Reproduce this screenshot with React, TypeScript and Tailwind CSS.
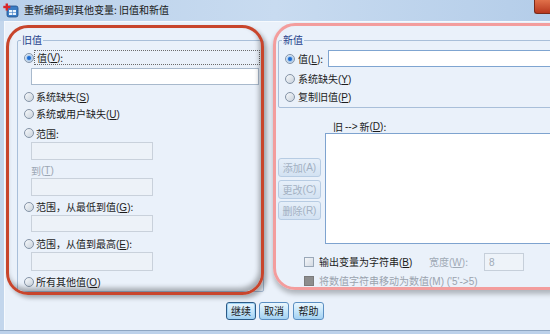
import React from "react";

const FONT = { fontFamily: '"Noto Sans CJK SC", "Liberation Sans", sans-serif' };

function Radio({ checked }: { checked?: boolean }) {
  return (
    <span className="w-[10px] h-[10px] rounded-full border border-[#8493a6] bg-gradient-to-br from-[#f7f9fb] to-[#c9d2dc] flex items-center justify-center shrink-0">
      {checked && <span className="w-[4px] h-[4px] rounded-full bg-[#1d6bd0] shadow-[0_0_2px_1px_#8cbcf0]" />}
    </span>
  );
}

function Mn({ c }: { c: string }) {
  return (
    <span className="font-['Liberation_Sans']">
      (<u>{c}</u>)
    </span>
  );
}

function DisabledInput({ h, mt }: { h: string; mt: string }) {
  return <div className={`ml-[7px] w-[122px] ${h} ${mt} border border-[#c9d1db] bg-[#edf2f8]`} />;
}

function SideBtn({ label, k, mt }: { label: string; k: string; mt: string }) {
  return (
    <div className={`${mt} w-[43px] h-[19px] rounded-[3px] border border-[#b7cce3] bg-gradient-to-b from-[#e6eff9] to-[#d3e2f2] flex items-center justify-center text-[#a3b1c2] text-[10px] leading-none`}>
      {label}
      <span className="font-['Liberation_Sans']">({k})</span>
    </div>
  );
}

function BottomBtn({ label, def, w }: { label: string; def?: boolean; w: string }) {
  return (
    <div
      className={`${w} h-[18px] rounded-[3px] border ${
        def ? "border-[#2c5a86] shadow-[inset_0_0_0_1px_#9fd3f5]" : "border-[#5b8fc2]"
      } bg-gradient-to-b from-[#eaf6fd] via-[#c6e6fa] to-[#a3d1f2] flex items-center justify-center text-[10px] leading-none text-[#1b1b1b]`}
    >
      {label}
    </div>
  );
}

export default function App() {
  return (
    <div className="w-[550px] h-[334px] overflow-hidden bg-[#c3d6ec] flex flex-col text-[10px] text-[#1c1c1c]" style={FONT}>
      {/* Title bar */}
      <div className="h-[21px] shrink-0 flex items-start bg-gradient-to-r from-[#b9d0ea] via-[#c8dbf0] to-[#b4cde9]">
        <div className="ml-[3px] mt-[3px] w-[16px] h-[15px]">
          <svg width="16" height="15" viewBox="0 0 16 15">
            <rect x="4" y="3" width="11" height="11" rx="2" fill="#3a7cc4" stroke="#1f4f8a" strokeWidth="0.8" />
            <rect x="6" y="7" width="7" height="5" fill="#eaf3fc" />
            <line x1="6" y1="9.5" x2="13" y2="9.5" stroke="#3a7cc4" strokeWidth="0.6" />
            <line x1="9.5" y1="7" x2="9.5" y2="12" stroke="#3a7cc4" strokeWidth="0.6" />
            <rect x="2.6" y="0.5" width="2.4" height="7" fill="#d8262a" />
            <rect x="0.3" y="2.8" width="7" height="2.4" fill="#d8262a" />
          </svg>
        </div>
        <div className="ml-[5px] mt-[4px] leading-[12px] text-[10px] text-[#1a1a1a]">重新编码到其他变量: 旧值和新值</div>
        <div className="ml-auto w-[16px] h-[14px] rounded-bl-[3px] bg-gradient-to-b from-[#e0704a] to-[#b7361d] border-l border-b border-[#7a2a1a]" />
      </div>

      {/* Body */}
      <div className="flex-1 ml-[4px] bg-[#eaf1fa] border-t border-l border-[#f6f9fd] flex flex-col relative">
        <div className="flex items-start pt-[1px]">
          {/* Left column */}
          <div className="relative ml-[1px] mt-[2px] w-[258px] h-[270px] shrink-0">
            <div className="relative mt-[15px] ml-[11px] w-[247px] h-[252px] border border-[#a9bfd9] rounded-[2px] flex flex-col pl-[6px] pt-[9px]">
              <span className="absolute -top-[7px] left-[3px] px-[1px] bg-[#eaf1fa] text-[#1f3f8c] leading-[12px]">旧值</span>
              <div className="h-[15px] flex items-center">
                <Radio checked />
                <div className="flex-1 mr-[3px] h-[15px] border border-dotted border-[#6b6b6b] flex items-center pl-[2px]">
                  值<Mn c="V" />:
                </div>
              </div>
              <div className="ml-[7px] mt-[3px] w-[228px] h-[17px] border border-[#a8b9cc] bg-white" />
              <div className="mt-[5px] h-[14px] flex items-center gap-[2px]">
                <Radio />
                <span>系统缺失<Mn c="S" /></span>
              </div>
              <div className="mt-[3px] h-[14px] flex items-center gap-[2px]">
                <Radio />
                <span>系统或用户缺失<Mn c="U" /></span>
              </div>
              <div className="mt-[5px] h-[14px] flex items-center gap-[2px]">
                <Radio />
                <span>范围:</span>
              </div>
              <DisabledInput h="h-[18px]" mt="mt-[2px]" />
              <div className="ml-[7px] mt-[3px] h-[14px] flex items-center text-[#9ba6b3]">
                到<Mn c="T" />
              </div>
              <DisabledInput h="h-[18px]" mt="mt-[1px]" />
              <div className="mt-[4px] h-[14px] flex items-center gap-[2px]">
                <Radio />
                <span>范围，从最低到值<Mn c="G" />:</span>
              </div>
              <DisabledInput h="h-[17px]" mt="mt-[1px]" />
              <div className="mt-[5px] h-[14px] flex items-center gap-[2px]">
                <Radio />
                <span>范围，从值到最高<Mn c="E" />:</span>
              </div>
              <DisabledInput h="h-[19px]" mt="mt-[1px]" />
              <div className="mt-[4px] h-[14px] flex items-center gap-[2px]">
                <Radio />
                <span>所有其他值<Mn c="O" /></span>
              </div>
            </div>
            {/* red annotation */}
            <div className="absolute inset-0 rounded-[22px] border-[3px] border-[#c8452c] shadow-[3px_3px_4px_rgba(0,0,0,0.3),inset_-2px_-4px_5px_rgba(0,0,0,0.3)] pointer-events-none" />
          </div>

          {/* Right column */}
          <div className="relative ml-[9px] w-[300px] h-[267px] shrink-0">
            <div className="relative mt-[17px] ml-[5px] w-[290px] h-[68px] border border-[#a9bfd9] rounded-[2px] flex flex-col pl-[6px] pt-[9px]">
              <span className="absolute -top-[7px] left-[3px] px-[1px] bg-[#eaf1fa] text-[#1f3f8c] leading-[12px]">新值</span>
              <div className="h-[17px] flex items-center">
                <Radio checked />
                <span className="ml-[3px] w-[30px]">值<Mn c="L" />:</span>
                <div className="w-[240px] h-[17px] border border-[#7fa5d1] bg-white" />
              </div>
              <div className="mt-[5px] h-[14px] flex items-center gap-[3px]">
                <Radio />
                <span>系统缺失<Mn c="Y" /></span>
              </div>
              <div className="mt-[4px] h-[14px] flex items-center gap-[3px]">
                <Radio />
                <span>复制旧值<Mn c="P" /></span>
              </div>
            </div>

            <div className="mt-[11px] flex items-start">
              <div className="ml-[5px] w-[43px] pt-[39px] flex flex-col">
                <SideBtn label="添加" k="A" mt="mt-0" />
                <SideBtn label="更改" k="C" mt="mt-[3px]" />
                <SideBtn label="删除" k="R" mt="mt-[2px]" />
              </div>
              <div className="ml-[4px] flex flex-col">
                <div className="h-[14px] pl-[8px] flex items-center">
                  旧 <span className="font-['Liberation_Sans'] mx-[2px]">--&gt;</span> 新<Mn c="D" />:
                </div>
                <div className="w-[240px] h-[111px] border border-[#7ea3cf] bg-white" />
              </div>
            </div>

            <div className="mt-[9px] ml-[31px] h-[18px] flex items-center">
              <span className="w-[10px] h-[10px] border border-[#9aa8b8] bg-gradient-to-br from-[#f4f6f9] to-[#d4dbe3] shrink-0" />
              <span className="ml-[5px] w-[110px]">输出变量为字符串<Mn c="B" /></span>
              <span className="w-[55px] text-[#a0aab6]">宽度<Mn c="W" />:</span>
              <div className="w-[40px] h-[18px] border border-[#c6cfda] bg-[#eef3f9] flex items-center pl-[4px] text-[#a0aab6] font-['Liberation_Sans']">
                8
              </div>
            </div>
            <div className="mt-[3px] ml-[31px] h-[14px] flex items-center">
              <span className="w-[10px] h-[10px] border border-[#7a7a7a] bg-[#8d8d8d] shrink-0" />
              <span className="ml-[5px] text-[#9aa3ae]">
                将数值字符串移动为数值<span className="font-['Liberation_Sans']">(M) ('5'-&gt;5)</span>
              </span>
            </div>

            {/* pink annotation */}
            <div className="absolute inset-0 rounded-[22px] border-[3px] border-[#f39d9d] shadow-[0_4px_5px_rgba(0,0,0,0.25)] pointer-events-none" />
          </div>
        </div>

        {/* bottom buttons */}
        <div className="mt-[7px] pl-[221px] flex items-center gap-[3px]">
          <BottomBtn label="继续" def w="w-[30px]" />
          <BottomBtn label="取消" w="w-[30px]" />
          <div className="ml-[1px]">
            <BottomBtn label="帮助" w="w-[31px]" />
          </div>
        </div>
      </div>
      <div className="h-[4px] shrink-0 border-t border-[#8ea6c2] bg-[#bcd1ea]" />
    </div>
  );
}
